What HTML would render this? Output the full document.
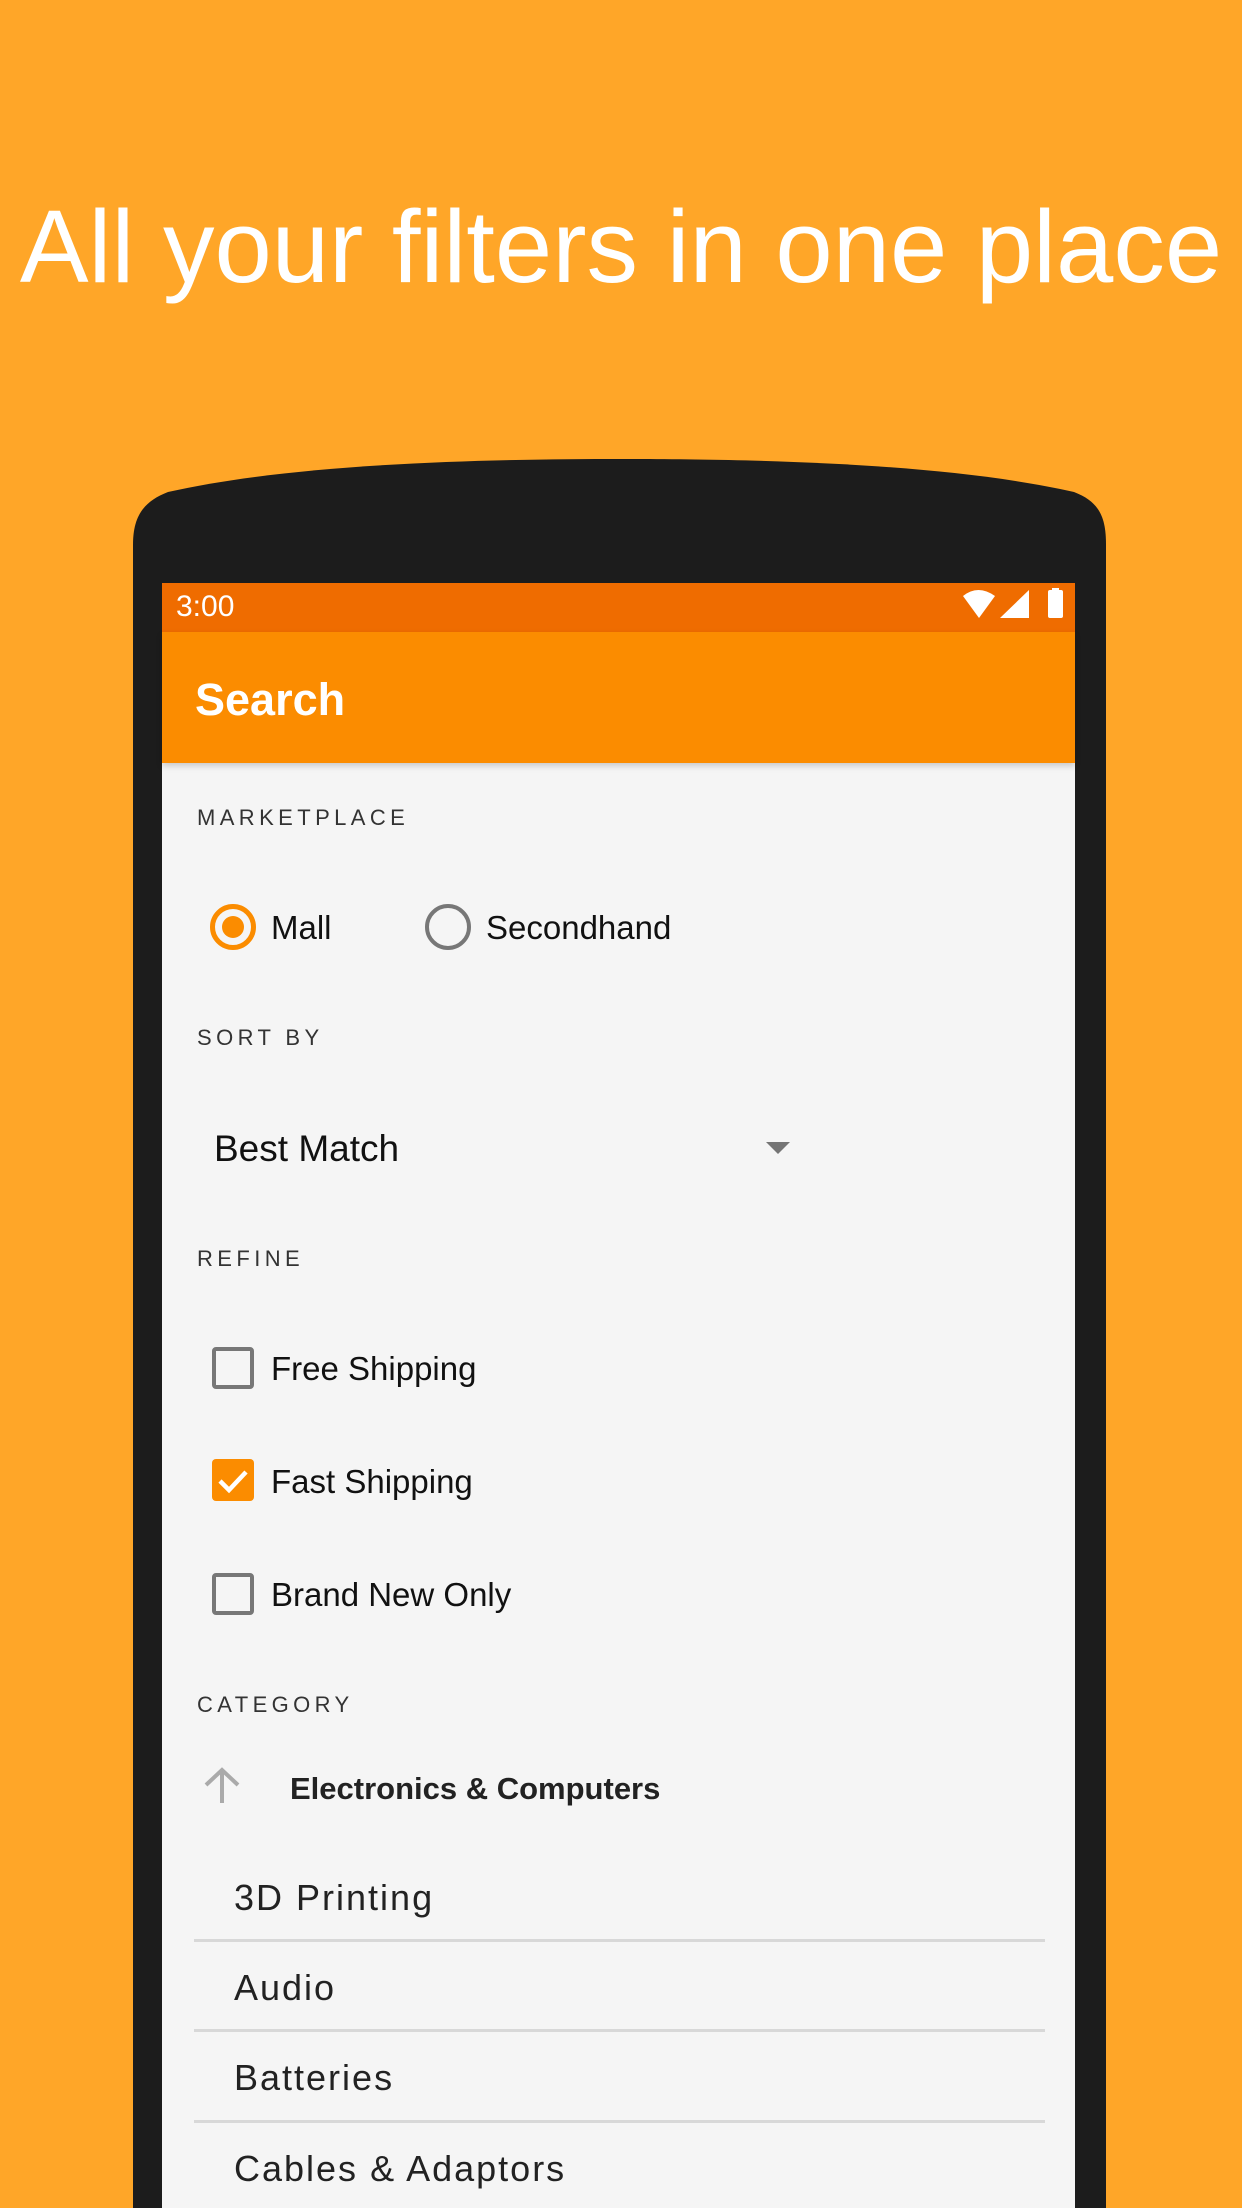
<!DOCTYPE html>
<html><head><meta charset="utf-8"><style>
*{margin:0;padding:0;box-sizing:border-box}
body{width:1242px;height:2208px;background:#FFA628;position:relative;overflow:hidden;font-family:"Liberation Sans",sans-serif}
.a{position:absolute;white-space:nowrap}
.t{height:60px;line-height:60px;margin-top:-30px}
.hdr{font-size:22px;letter-spacing:4.4px;color:#333}
.opt{font-size:33px;color:#111}
.li{font-size:36px;color:#222;letter-spacing:2px;left:234px}
.div{position:absolute;left:194px;width:851px;height:3px;background:#d8d8d8}
.cb{position:absolute;left:212px;width:42px;height:42px;border:4px solid #777;border-radius:4px}
</style></head><body>
<div class="a" style="left:0;width:1242px;text-align:center;top:182px;font-size:103px;color:#fff;line-height:130px;letter-spacing:0px">All your filters in one place</div>
<svg class="a" style="left:0;top:0" width="1242" height="2208"><path d="M133,2208 L133,545 C133,518 142,502 168,492 C300,462 500,459 621,459 C742,459 942,462 1074,492 C1100,502 1106,518 1106,545 L1106,2208 Z" fill="#1C1C1C"/></svg>
<div class="a" style="left:162px;top:583px;width:913px;height:1625px;background:#F5F5F5"></div>
<div class="a" style="left:162px;top:583px;width:913px;height:49px;background:#EF6C00"></div>
<div class="a t" style="left:176px;top:607px;font-size:30px;color:#fff">3:00</div>
<svg class="a" style="left:960px;top:588px" width="110" height="32"><path d="M3,8 Q18,-4 35,8 L19,30 Z" fill="#fff"/><path d="M40,30 L69,2 L69,30 Z" fill="#fff"/><rect x="88" y="2" width="15" height="28" rx="2" fill="#fff"/><rect x="92" y="0" width="7" height="3" fill="#fff"/></svg>
<div class="a" style="left:162px;top:632px;width:913px;height:131px;background:#FB8C00;box-shadow:0 3px 6px rgba(0,0,0,.18)"></div>
<div class="a t" style="left:195px;top:700px;font-size:45px;font-weight:bold;color:#fff">Search</div>
<div class="a t hdr" style="left:197px;top:818px">MARKETPLACE</div>
<div class="a" style="left:210px;top:904px;width:46px;height:46px;border:5px solid #FB8C00;border-radius:50%"></div>
<div class="a" style="left:222px;top:916px;width:22px;height:22px;background:#FB8C00;border-radius:50%"></div>
<div class="a t opt" style="left:271px;top:928px">Mall</div>
<div class="a" style="left:425px;top:904px;width:46px;height:46px;border:4px solid #777;border-radius:50%"></div>
<div class="a t opt" style="left:486px;top:928px">Secondhand</div>
<div class="a t hdr" style="left:197px;top:1038px">SORT BY</div>
<div class="a t" style="left:214px;top:1149px;font-size:37px;color:#111">Best Match</div>
<svg class="a" style="left:766px;top:1142px" width="24" height="13"><path d="M0,0 L24,0 L12,12 Z" fill="#757575"/></svg>
<div class="a t hdr" style="left:197px;top:1259px">REFINE</div>
<div class="cb" style="top:1347px"></div>
<div class="a t opt" style="left:271px;top:1369px">Free Shipping</div>
<div class="a" style="left:212px;top:1459px;width:42px;height:42px;background:#FB8C00;border-radius:4px"></div>
<svg class="a" style="left:212px;top:1459px" width="42" height="42"><path d="M8,22 L17,31 L34,13" stroke="#fff" stroke-width="4.5" fill="none"/></svg>
<div class="a t opt" style="left:271px;top:1482px">Fast Shipping</div>
<div class="cb" style="top:1573px"></div>
<div class="a t opt" style="left:271px;top:1595px">Brand New Only</div>
<div class="a t hdr" style="left:197px;top:1705px">CATEGORY</div>
<svg class="a" style="left:202px;top:1766px" width="40" height="40"><path d="M20,37 L20,4 M4,19 L20,4 L36,19" stroke="#aaa" stroke-width="4" fill="none"/></svg>
<div class="a t" style="left:290px;top:1789px;font-size:31px;font-weight:bold;color:#222">Electronics &amp; Computers</div>
<div class="a t li" style="top:1898px">3D Printing</div>
<div class="div" style="top:1939px"></div>
<div class="a t li" style="top:1988px">Audio</div>
<div class="div" style="top:2029px"></div>
<div class="a t li" style="top:2078px">Batteries</div>
<div class="div" style="top:2120px"></div>
<div class="a t li" style="top:2169px">Cables &amp; Adaptors</div>
</body></html>
